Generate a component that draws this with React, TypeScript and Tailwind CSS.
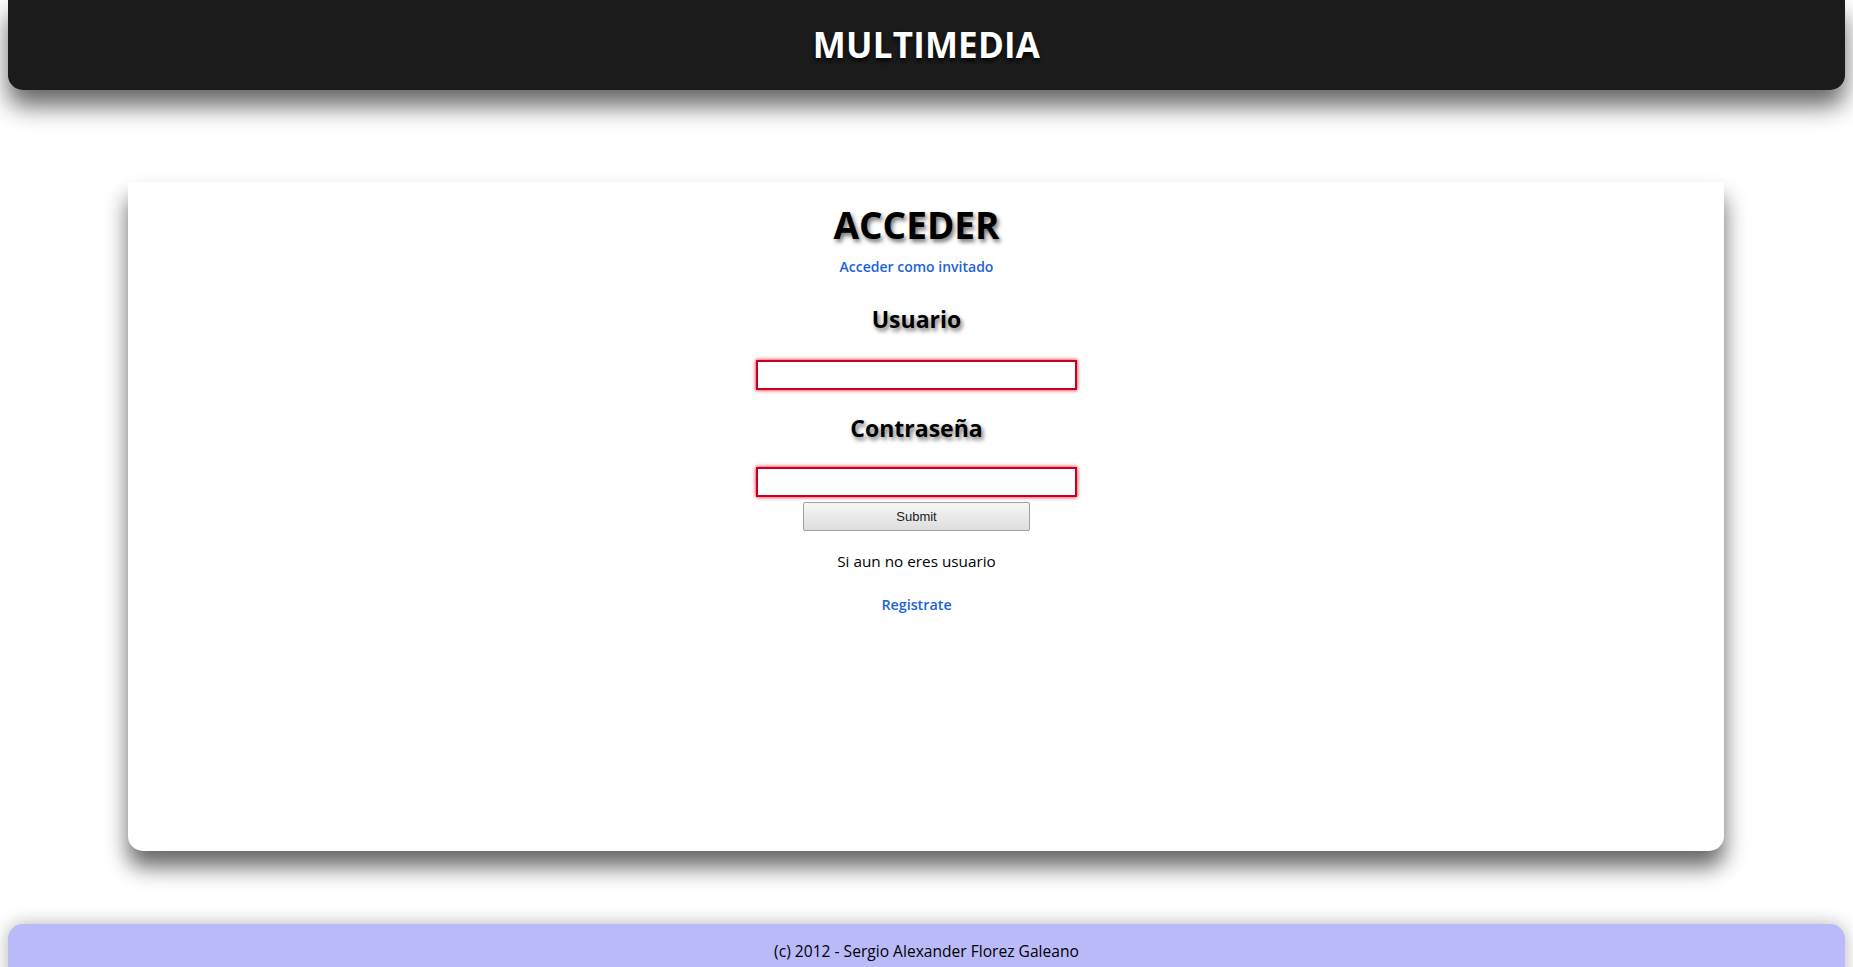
export default function App() {
  const heading = 'font-bold text-black [text-shadow:2px_3px_4px_rgba(0,0,0,0.55)]';
  const field =
    'block w-[321px] h-[30px] border-2 border-[#c8001e] bg-white shadow-[0_0_4px_#ff0022] outline-none';

  return (
    <div className="min-h-screen bg-white font-['Open_Sans',sans-serif] text-black">
      <header className="mx-2 h-[90px] rounded-b-[15px] bg-[#1b1b1b] flex items-center justify-center shadow-[0_16px_24px_rgba(0,0,0,0.6)]">
        <h1 className="text-[35px] font-bold text-white tracking-[0.2px] [text-shadow:0_3px_4px_rgba(0,0,0,0.8)]">
          MULTIMEDIA
        </h1>
      </header>

      <main className="mt-[92px] ml-[128px] w-[1596px] h-[669px] bg-white rounded-b-[15px] shadow-[0_16px_22px_rgba(0,0,0,0.6)]">
        <div className="pt-[19px] pr-[19px] flex flex-col items-center">
          <h2 className={`${heading} text-[37px] leading-[48px]`}>ACCEDER</h2>
          <a href="#" className="mt-[8px] text-[14px] leading-[20px] font-semibold text-[#1b63d8]">
            Acceder como invitado
          </a>

          <h3 className={`${heading} mt-[26px] text-[23px] leading-[32px]`}>Usuario</h3>
          <input type="text" className={`${field} mt-[25px]`} />

          <h3 className={`${heading} mt-[22px] text-[23px] leading-[32px]`}>Contraseña</h3>
          <input type="password" className={`${field} mt-[23px]`} />

          <button className="mt-[5px] w-[227px] h-[29px] rounded-[2px] border border-[#a0a0a0] bg-gradient-to-b from-[#f6f6f6] to-[#dddddd] font-['Liberation_Sans',sans-serif] text-[13px] text-[#222]">
            Submit
          </button>

          <p className="mt-[19px] text-[15.3px] leading-[22px]">Si aun no eres usuario</p>
          <a href="#" className="mt-[23px] text-[14.3px] leading-[20px] font-semibold text-[#1b63d8]">
            Registrate
          </a>
        </div>
      </main>

      <footer className="mx-2 mt-[73px] h-[60px] rounded-t-[15px] bg-[#babaf9] shadow-[0_0_18px_rgba(0,0,0,0.3)] pt-[15px] text-center">
        <p className="text-[15.6px] leading-[24px]">(c) 2012 - Sergio Alexander Florez Galeano</p>
      </footer>
    </div>
  );
}
